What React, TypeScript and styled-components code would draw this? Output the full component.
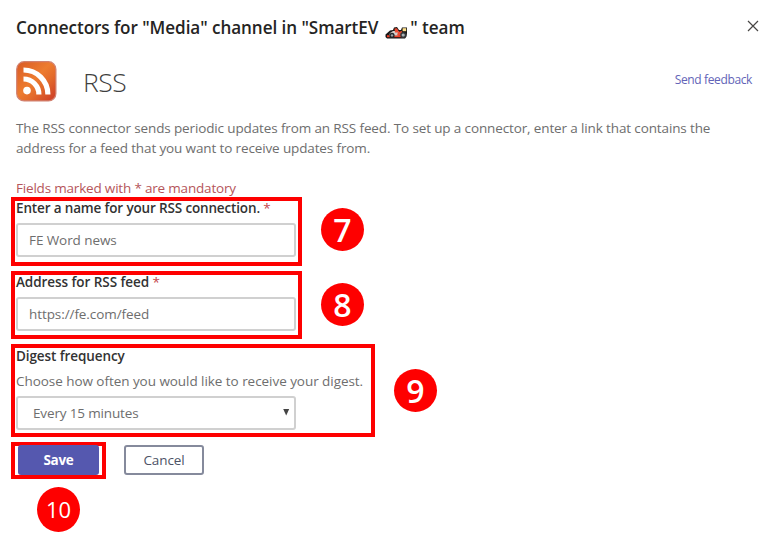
import React from 'react';
import styled, { createGlobalStyle } from 'styled-components';

const GlobalStyle = createGlobalStyle`
  *, *::before, *::after { box-sizing: border-box; }
  body { margin: 0; background: #fff; }
  input, button, select { font-family: inherit; }
`;

const Page = styled.main`
  width: 779px;
  height: 555px;
  padding: 0 0 0 11px;
  overflow: hidden;
  background: #fff;
  color: #6e6e6e;
  font-family: 'Open Sans', 'Noto Sans', sans-serif;
  font-size: 13.5px;
  line-height: 20px;
  white-space: nowrap;
`;

const TitleBar = styled.header`
  display: flex;
  align-items: flex-start;
  justify-content: space-between;
  height: 61px;
  padding: 16px 20px 0 5px;
`;

const Title = styled.h1`
  display: flex;
  margin: 0;
  color: #252423;
  font-size: 17.1px;
  font-weight: 600;
  line-height: 24px;
  letter-spacing: -0.06px;
`;

const CarIcon = styled.svg`
  width: 23px;
  height: 14px;
  margin: 10px 2px 0 7px;
`;

const CloseButton = styled.button`
  display: flex;
  margin-top: 4px;
  padding: 0;
  border: 0;
  background: none;
`;

const AppHeader = styled.section`
  display: flex;
  height: 57px;
  padding: 0 27px 0 5px;
`;

const AppName = styled.h2`
  flex: 1;
  margin: 3px 0 0 26px;
  color: #3f3f3f;
  font-size: 26.5px;
  font-weight: 300;
  line-height: 36px;
  letter-spacing: -0.5px;
`;

const FeedbackLink = styled.a`
  margin-top: 9px;
  color: #6264b7;
  font-size: 12px;
  letter-spacing: -0.37px;
`;

const Description = styled.p`
  margin: 0 0 0 5px;
  letter-spacing: -0.13px;
`;

const MandatoryNote = styled.p`
  margin: 20px 0 0 5px;
  height: 19px;
  color: #b5555a;
  line-height: 21px;
  letter-spacing: -0.19px;
`;

const StepRow = styled.div<{ $gap: number }>`
  display: flex;
  align-items: flex-start;
  gap: ${(p) => p.$gap}px;
  margin-bottom: 5px;
`;

const Highlight = styled.div<{ $width: number; $height: number }>`
  flex: none;
  width: ${(p) => p.$width}px;
  height: ${(p) => p.$height}px;
  padding: 0 1px;
  border: 4px solid #fe0000;
`;

const StepBadge = styled.span<{ $top: number; $size?: number }>`
  display: flex;
  align-items: center;
  justify-content: center;
  width: 43px;
  height: ${(p) => (p.$size ? 45 : 43)}px;
  margin-top: ${(p) => p.$top}px;
  border-radius: 50%;
  background: #fe0000;
  color: #fff;
  font-size: ${(p) => p.$size ?? 32}px;
  font-weight: ${(p) => (p.$size ? 500 : 600)};
  line-height: 43px;
`;

const Label = styled.label<{ $spacing: number; $line?: number }>`
  display: block;
  height: 22px;
  color: #333;
  font-weight: 600;
  line-height: ${(p) => p.$line ?? 15}px;
  letter-spacing: ${(p) => p.$spacing}px;
`;

const Required = styled.span`
  color: #c4474c;
  font-weight: 400;
`;

const Hint = styled.p`
  height: 26px;
  margin: 0;
  line-height: 23px;
  letter-spacing: -0.05px;
`;

const TextInput = styled.input`
  display: block;
  width: 280px;
  height: 34px;
  padding: 0 11px 1px;
  border: 2px solid #d0d0d0;
  border-radius: 3px;
  outline: 0;
  background: #fff;
  color: #6e6e6e;
  font-size: 13.5px;
  letter-spacing: -0.08px;
`;

const SelectBox = styled.div`
  display: flex;
  align-items: center;
  justify-content: space-between;
  width: 280px;
  height: 34px;
  padding: 0 4px 0 15px;
  border: 2px solid #d0d0d0;
  border-radius: 3px;
  letter-spacing: -0.15px;
`;

const Actions = styled.div`
  display: flex;
  align-items: flex-start;
  gap: 18px;
`;

const Button = styled.button<{ $primary?: boolean }>`
  width: ${(p) => (p.$primary ? 81 : 80)}px;
  height: 30px;
  padding: 0;
  border: ${(p) => (p.$primary ? '0' : '2px solid #858a9c')};
  border-radius: 3px;
  background: ${(p) => (p.$primary ? '#5558af' : '#fff')};
  color: ${(p) => (p.$primary ? '#fff' : '#4d5366')};
  font-size: 13.5px;
  font-weight: ${(p) => (p.$primary ? 700 : 400)};
  letter-spacing: ${(p) => (p.$primary ? -0.3 : -0.1)}px;
`;

const SaveSlot = styled.div`
  display: flex;
  margin-left: 2px;
  margin-top: -1px;
`;

const CancelSlot = styled.div`
  display: flex;
  margin-top: 3px;
`;

const LastStep = styled.div`
  display: flex;
  padding: 8px 0 0 26px;
`;

const RssLogo = () => (
  <svg width="41" height="41" viewBox="0 0 41 41">
    <defs>
      <linearGradient id="rssFill" x1="0" y1="0" x2="1" y2="1">
        <stop offset="0" stopColor="#d95a25" />
        <stop offset="0.45" stopColor="#ed7c30" />
        <stop offset="0.65" stopColor="#e36a2b" />
        <stop offset="1" stopColor="#cb3826" />
      </linearGradient>
    </defs>
    <rect x="0.7" y="0.7" width="39.2" height="39.2" rx="7.5" fill="url(#rssFill)" stroke="#d28170" strokeWidth="1.2" />
    <g fill="none" stroke="#fff" strokeWidth="5.2">
      <path d="M7.5 9A24.4 24.4 0 0 1 31.9 33.4" />
      <path d="M7.5 18A15.4 15.4 0 0 1 22.9 33.4" />
    </g>
    <circle cx="11" cy="29.6" r="3.8" fill="#fff" />
  </svg>
);

const RaceCar = () => (
  <CarIcon viewBox="0 0 23 14">
    <path d="M0.5 8.5L5 4.5L8 4L9 1.5L12 1L14 4L16 4L17 1.4H22V7L21.5 10.5L20 12.5H2L0.5 11Z" fill="#171717" />
    <path d="M2 9.2H20V11.2H2Z" fill="#ed3d25" />
    <path d="M5 7L8 5H13L16 7.5L13 9.5H4Z" fill="#d4cfcb" />
    <path d="M9.5 2.6L12 2.2L13.5 5V6.5H10Z" fill="#ed4930" />
    <path d="M13 6L17 5V9.5H12Z" fill="#ed4930" />
    <path d="M17.6 2.2H21.2V5.2H17.6Z" fill="#ffe08a" />
    <circle cx="7" cy="9.4" r="2.6" fill="#242628" />
    <circle cx="7" cy="9.4" r="1.2" fill="#9aa3a8" />
    <circle cx="18.2" cy="9" r="3" fill="#34383a" />
    <circle cx="18.2" cy="9" r="1.6" fill="#abb2b5" />
  </CarIcon>
);

export default function App() {
  return (
    <>
      <GlobalStyle />
      <Page>
        <TitleBar>
          <Title>
            <span>Connectors for "Media" channel in "SmartEV</span>
            <RaceCar />
            <span>" team</span>
          </Title>
          <CloseButton aria-label="Close">
            <svg width="12" height="12" viewBox="0 0 12 12">
              <path d="M1 1L11 11M11 1L1 11" stroke="#484644" strokeWidth="1.2" />
            </svg>
          </CloseButton>
        </TitleBar>

        <AppHeader>
          <RssLogo />
          <AppName>RSS</AppName>
          <FeedbackLink>Send feedback</FeedbackLink>
        </AppHeader>

        <Description>
          The RSS connector sends periodic updates from an RSS feed. To set up a connector, enter a link that contains the
          <br />
          address for a feed that you want to receive updates from.
        </Description>
        <MandatoryNote>Fields marked with * are mandatory</MandatoryNote>

        <StepRow $gap={19}>
          <Highlight $width={291} $height={69}>
            <Label $spacing={-0.15}>
              Enter a name for your RSS connection. <Required>*</Required>
            </Label>
            <TextInput defaultValue="FE Word news" />
          </Highlight>
          <StepBadge $top={11}>7</StepBadge>
        </StepRow>

        <StepRow $gap={19}>
          <Highlight $width={291} $height={68}>
            <Label $spacing={-0.06}>
              Address for RSS feed <Required>*</Required>
            </Label>
            <TextInput defaultValue="https://fe.com/feed" />
          </Highlight>
          <StepBadge $top={12}>8</StepBadge>
        </StepRow>

        <StepRow $gap={19}>
          <Highlight $width={364} $height={93}>
            <Label $spacing={-0.09} $line={17}>Digest frequency</Label>
            <Hint>Choose how often you would like to receive your digest.</Hint>
            <SelectBox>
              <span>Every 15 minutes</span>
              <svg width="8" height="8" viewBox="0 0 8 8">
                <path d="M1.2 0H7.2L4.2 6.4Z" fill="#444" />
              </svg>
            </SelectBox>
          </Highlight>
          <StepBadge $top={25}>9</StepBadge>
        </StepRow>

        <Actions>
          <Highlight $width={95} $height={37}>
            <SaveSlot>
              <Button $primary>Save</Button>
            </SaveSlot>
          </Highlight>
          <CancelSlot>
            <Button>Cancel</Button>
          </CancelSlot>
        </Actions>
        <LastStep>
          <StepBadge $top={0} $size={22}>10</StepBadge>
        </LastStep>
      </Page>
    </>
  );
}
